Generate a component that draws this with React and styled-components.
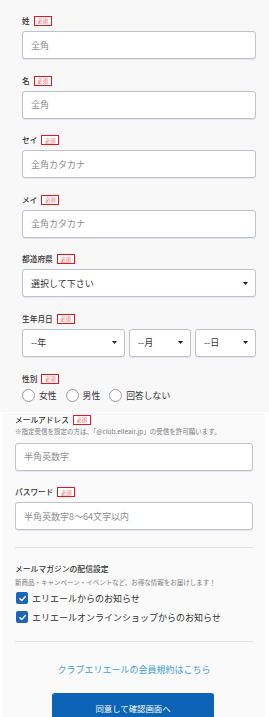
import React from "react";
import styled, { createGlobalStyle } from "styled-components";

const Global = createGlobalStyle`
  html, body { margin: 0; padding: 0; background: #ffffff; }
  body { font-family: "Noto Sans CJK JP", "Noto Sans", sans-serif; color: #333; }
  * { box-sizing: border-box; }
`;

const TopSection = styled.section`
  background: #f8f8f9;
  padding: 16px 13px 10px 22px;
`;

const LowerCard = styled.section`
  background: #fafafa;
  margin: 1px 4px 0 2px;
  padding: 2px 12px 0 13px;
`;

const Field = styled.div`
  margin-bottom: ${(p) => (p.$gap != null ? p.$gap : 16.6)}px;
`;

const LabelRow = styled.div`
  display: flex;
  align-items: center;
  gap: 4px;
  height: 10px;
  margin-bottom: ${(p) => (p.$mb != null ? p.$mb : 5)}px;
`;

const LabelText = styled.span`
  font-size: 7.7px;
  font-weight: 500;
  color: #333;
  line-height: 10px;
  white-space: nowrap;
`;

const Badge = styled.span`
  display: inline-flex;
  align-items: center;
  justify-content: center;
  height: 10px;
  width: 18px;
  border: 1px solid #e8141c;
  color: #ef5a62;
  font-size: 5.2px;
  line-height: 1;
  background: #fff;
`;

const TextInput = styled.input`
  display: block;
  width: 100%;
  height: 28px;
  border: 1px solid #bcc3cf;
  border-radius: 3px;
  background: #fff;
  padding: 0 8px;
  font-family: inherit;
  font-size: 9px;
  color: #333;
  outline: none;
  box-shadow: 0 1px 0 rgba(120, 130, 150, 0.15);
  &::placeholder { color: #8d8d8d; }
`;

const SelectBox = styled.div`
  display: flex;
  align-items: center;
  justify-content: space-between;
  height: 28px;
  border: 1px solid #bcc3cf;
  border-radius: 3px;
  background: #fff;
  padding: 0 7px 0 8px;
  font-size: 9px;
  color: #333;
  box-shadow: 0 1px 0 rgba(120, 130, 150, 0.15);
`;

const DateGrid = styled.div`
  display: grid;
  grid-template-columns: 103fr 62fr 61fr;
  gap: 4px;
`;

const RadioRow = styled.div`
  display: flex;
  align-items: center;
  height: 13px;
  gap: 9px;
`;

const RadioItem = styled.label`
  display: flex;
  align-items: center;
  gap: 4px;
  font-size: 8.8px;
  color: #333;
  white-space: nowrap;
`;

const RadioCircle = styled.span`
  width: 13px;
  height: 13px;
  border-radius: 50%;
  border: 1px solid #9a9a9a;
  background: #fff;
`;

const Note = styled.div`
  font-size: 6.5px;
  color: #7a7a7a;
  line-height: 9px;
  white-space: nowrap;
  margin: ${(p) => p.$m || "0"};
`;

const Divider = styled.hr`
  border: none;
  border-top: 1px solid #e2e2e2;
  margin: ${(p) => p.$m || "0"};
`;

const SubTitle = styled.div`
  font-size: 7.8px;
  font-weight: 500;
  color: #333;
  line-height: 12px;
  margin-top: 15px;
`;

const CheckRow = styled.label`
  display: flex;
  align-items: center;
  gap: 4px;
  height: 14px;
  margin-top: ${(p) => p.$mt || 0}px;
  padding-left: 1px;
  font-size: 9px;
  font-weight: 400;
  color: #333;
  white-space: nowrap;
`;

const CheckBox = styled.span`
  display: inline-flex;
  align-items: center;
  justify-content: center;
  width: 12px;
  height: 12px;
  border-radius: 2px;
  background: #1a66b8;
`;

const LinkText = styled.a`
  display: block;
  text-align: center;
  font-size: 9px;
  line-height: 12px;
  color: #3d9fd8;
  text-decoration: none;
  margin-top: 22px;
`;

const SubmitButton = styled.button`
  display: block;
  width: 162px;
  height: 30px;
  margin: 17px 0 0 37px;
  border: none;
  border-radius: 3px;
  background: #0b64b6;
  color: #fff;
  font-family: inherit;
  font-size: 8.4px;
`;

const Arrow = () => (
  <svg width="5" height="3" viewBox="0 0 5 3">
    <path d="M0 0 H5 L2.5 3 Z" fill="#222" />
  </svg>
);

const Check = () => (
  <svg width="9" height="9" viewBox="0 0 10 10">
    <path d="M2 5.2 L4.2 7.3 L8.2 2.8" fill="none" stroke="#fff" strokeWidth="1.5" strokeLinecap="round" strokeLinejoin="round" />
  </svg>
);

const Label = ({ children, mb }) => (
  <LabelRow $mb={mb}>
    <LabelText>{children}</LabelText>
    <Badge>必須</Badge>
  </LabelRow>
);

const Select = ({ children }) => (
  <SelectBox>
    <span>{children}</span>
    <Arrow />
  </SelectBox>
);

export default function App() {
  return (
    <>
      <Global />
      <TopSection>
        <Field>
          <Label>姓</Label>
          <TextInput placeholder="全角" />
        </Field>
        <Field>
          <Label>名</Label>
          <TextInput placeholder="全角" />
        </Field>
        <Field>
          <Label>セイ</Label>
          <TextInput placeholder="全角カタカナ" />
        </Field>
        <Field>
          <Label>メイ</Label>
          <TextInput placeholder="全角カタカナ" />
        </Field>
        <Field>
          <Label>都道府県</Label>
          <Select>選択して下さい</Select>
        </Field>
        <Field>
          <Label>生年月日</Label>
          <DateGrid>
            <Select>--年</Select>
            <Select>--月</Select>
            <Select>--日</Select>
          </DateGrid>
        </Field>
        <Field $gap={0}>
          <Label>性別</Label>
          <RadioRow>
            <RadioItem><RadioCircle />女性</RadioItem>
            <RadioItem><RadioCircle />男性</RadioItem>
            <RadioItem><RadioCircle />回答しない</RadioItem>
          </RadioRow>
        </Field>
      </TopSection>
      <LowerCard>
        <Field>
          <Label mb={2}>メールアドレス</Label>
          <Note $m="0 0 7px">※指定受信を設定の方は、「@club.elleair.jp」の受信を許可願います。</Note>
          <TextInput placeholder="半角英数字" />
        </Field>
        <Field $gap={0}>
          <Label>パスワード</Label>
          <TextInput placeholder="半角英数字8～64文字以内" />
        </Field>
        <Divider $m="17px 0 0" />
        <SubTitle>メールマガジンの配信設定</SubTitle>
        <Note $m="3px 0 0">新商品・キャンペーン・イベントなど、お得な情報をお届けします！</Note>
        <CheckRow $mt={4}>
          <CheckBox><Check /></CheckBox>
          エリエールからのお知らせ
        </CheckRow>
        <CheckRow $mt={5}>
          <CheckBox><Check /></CheckBox>
          エリエールオンラインショップからのお知らせ
        </CheckRow>
        <Divider $m="17px 0 0" />
        <LinkText href="#">クラブエリエールの会員規約はこちら</LinkText>
        <SubmitButton>同意して確認画面へ</SubmitButton>
      </LowerCard>
    </>
  );
}
